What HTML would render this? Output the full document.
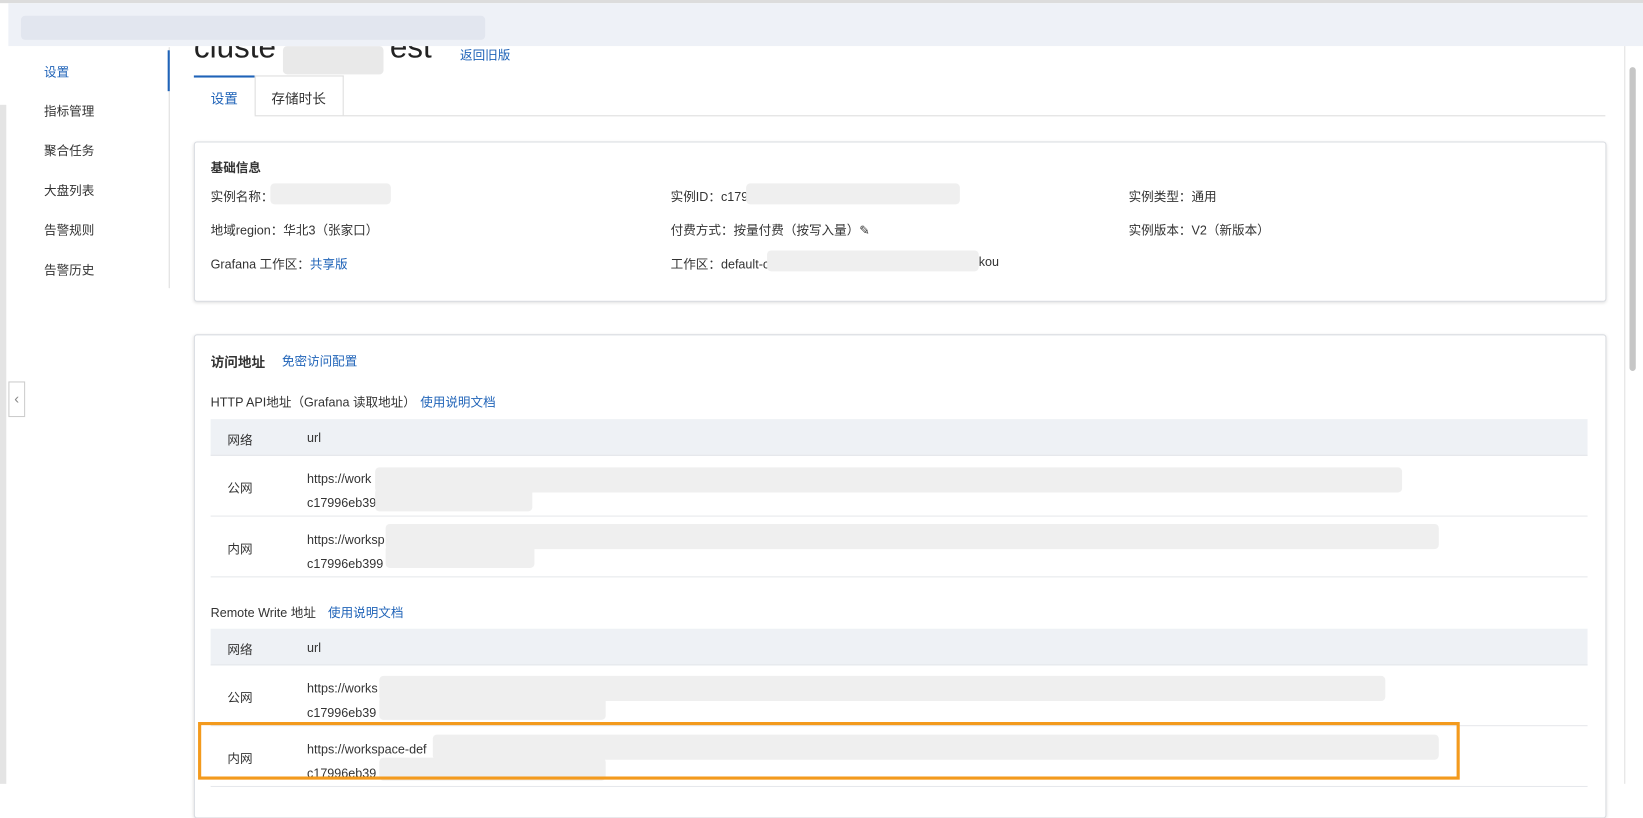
<!DOCTYPE html>
<html><head><meta charset="utf-8"><style>
html,body{margin:0;padding:0;width:1643px;height:784px;overflow:hidden;background:#fff}
#w{position:absolute;left:0;top:0;width:1568px;height:748px;transform:scale(1.0479);transform-origin:0 0;font-family:"Liberation Sans","Noto Sans CJK SC",sans-serif;font-size:12px;color:#333}
.a{position:absolute;white-space:nowrap}
.b{color:#1f63b8}
.bl{position:absolute;background:#efefef;border-radius:4px}
.card{position:absolute;left:185px;width:1346px;border:1px solid #d9dce1;border-radius:3px;box-shadow:0 1px 3px rgba(0,0,0,.12);background:#fff}
.th{position:absolute;left:201px;width:1314px;height:34px;background:#eef1f5;border-bottom:1px solid #e3e6ea}
.tr{position:absolute;left:201px;width:1314px;border-bottom:1px solid #e6e8eb}
</style></head><body><div id="w">
<div class="a" style="left:185px;top:26px;font-size:30px;color:#222;line-height:40px">cluste</div>
<div class="a" style="left:372px;top:26px;font-size:30px;color:#222;line-height:40px">est</div>
<div class="bl" style="left:270px;top:44px;width:96px;height:27px;background:#e9e9e9"></div>
<div class="a" style="left:0;top:0;width:1568px;height:3px;background:#dcdcdc"></div>
<div class="a" style="left:8px;top:3px;width:1560px;height:41px;background:#eef1f7"></div>
<div class="bl" style="left:20px;top:15px;width:443px;height:23px;background:#e2e6ef"></div>
<div class="a" style="left:0;top:100px;width:6px;height:648px;background:#e4e4e4"></div>
<div class="a" style="left:8px;top:364px;width:14px;height:32px;border:1px solid #ccc;background:#fff;color:#888;font-size:14px;line-height:30px;text-align:center">‹</div>
<div class="a" style="left:161px;top:45px;width:1px;height:230px;background:#ddd"></div>
<div class="a" style="left:160px;top:48px;width:2px;height:39px;background:#1f63b8"></div>
<div class="a b" style="left:42px;top:60px">设置</div>
<div class="a" style="left:42px;top:97px">指标管理</div>
<div class="a" style="left:42px;top:135px">聚合任务</div>
<div class="a" style="left:42px;top:173px">大盘列表</div>
<div class="a" style="left:42px;top:211px">告警规则</div>
<div class="a" style="left:42px;top:249px">告警历史</div>
<div class="a" style="left:1550px;top:44px;width:1px;height:704px;background:#e0e0e0"></div>
<div class="a" style="left:1555px;top:64px;width:6px;height:290px;background:#c6c6c6;border-radius:3px"></div>
<div class="a b" style="left:439px;top:44px">返回旧版</div>
<div class="a" style="left:185px;top:72px;width:58px;height:38px;border-top:2px solid #1f63b8;box-sizing:border-box;background:#fff"></div>
<div class="a b" style="left:201px;top:84px;font-size:13px">设置</div>
<div class="a" style="left:243px;top:72px;width:85px;height:38px;border:1px solid #ddd;border-bottom:none;box-sizing:border-box"></div>
<div class="a" style="left:259px;top:84px;font-size:13px">存储时长</div>
<div class="a" style="left:243px;top:110px;width:1289px;height:1px;background:#ddd"></div>
<div class="card" style="top:135px;height:151px"></div>
<div class="a" style="left:201px;top:151px;font-weight:bold">基础信息</div>
<div class="a" style="left:201px;top:179px">实例名称：</div><div class="bl" style="left:258px;top:175px;width:115px;height:20px"></div>
<div class="a" style="left:201px;top:211px">地域region：华北3（张家口）</div>
<div class="a" style="left:201px;top:243px">Grafana 工作区：<span class="b">共享版</span></div>
<div class="a" style="left:640px;top:179px">实例ID：c179</div><div class="bl" style="left:712px;top:175px;width:204px;height:20px"></div>
<div class="a" style="left:640px;top:211px">付费方式：按量付费（按写入量）✎</div>
<div class="a" style="left:640px;top:243px">工作区：default-c</div><div class="bl" style="left:732px;top:239px;width:202px;height:20px"></div><div class="a" style="left:934px;top:243px">kou</div>
<div class="a" style="left:1077px;top:179px">实例类型：通用</div>
<div class="a" style="left:1077px;top:211px">实例版本：V2（新版本）</div>
<div class="card" style="top:319px;height:460px"></div>
<div class="a" style="left:201px;top:335px;font-weight:bold;font-size:13px">访问地址</div>
<div class="a b" style="left:269px;top:336px">免密访问配置</div>
<div class="a" style="left:201px;top:375px">HTTP API地址（Grafana 读取地址）</div><div class="a b" style="left:401px;top:375px">使用说明文档</div>
<div class="th" style="top:400px"></div>
<div class="a" style="left:217px;top:411px">网络</div><div class="a" style="left:293px;top:411px">url</div>
<div class="tr" style="top:435px;height:57px"></div>
<div class="a" style="left:217px;top:457px">公网</div>
<div class="a" style="left:293px;top:446px;line-height:23px">https://work<br>c17996eb39</div>
<div class="bl" style="left:358px;top:446px;width:980px;height:24px"></div><div class="bl" style="left:358px;top:466px;width:150px;height:22px"></div>
<div class="tr" style="top:493px;height:57px"></div>
<div class="a" style="left:217px;top:515px">内网</div>
<div class="a" style="left:293px;top:504px;line-height:23px">https://worksp<br>c17996eb399</div>
<div class="bl" style="left:368px;top:500px;width:1005px;height:24px"></div><div class="bl" style="left:368px;top:520px;width:142px;height:22px"></div>
<div class="a" style="left:201px;top:576px">Remote Write 地址</div><div class="a b" style="left:313px;top:576px">使用说明文档</div>
<div class="th" style="top:600px"></div>
<div class="a" style="left:217px;top:611px">网络</div><div class="a" style="left:293px;top:611px">url</div>
<div class="tr" style="top:635px;height:57px"></div>
<div class="a" style="left:217px;top:657px">公网</div>
<div class="a" style="left:293px;top:646px;line-height:23px">https://works<br>c17996eb39</div>
<div class="bl" style="left:362px;top:645px;width:960px;height:24px"></div><div class="bl" style="left:362px;top:665px;width:216px;height:22px"></div>
<div class="tr" style="top:693px;height:57px"></div>
<div class="a" style="left:217px;top:715px">内网</div>
<div class="a" style="left:293px;top:704px;line-height:23px">https://workspace-def<br>c17996eb39</div>
<div class="bl" style="left:413px;top:701px;width:960px;height:24px"></div><div class="bl" style="left:362px;top:723px;width:216px;height:22px"></div>
<div class="a" style="left:189px;top:689px;width:1198px;height:49px;border:3px solid #f39a1d"></div>
</div></body></html>
